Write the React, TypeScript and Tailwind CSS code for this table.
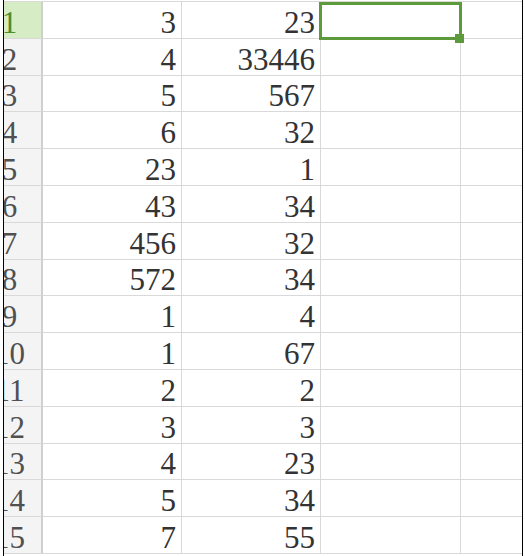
const rows: [number, string, string][] = [
  [1, "3", "23"],
  [2, "4", "33446"],
  [3, "5", "567"],
  [4, "6", "32"],
  [5, "23", "1"],
  [6, "43", "34"],
  [7, "456", "32"],
  [8, "572", "34"],
  [9, "1", "4"],
  [10, "1", "67"],
  [11, "2", "2"],
  [12, "3", "3"],
  [13, "4", "23"],
  [14, "5", "34"],
  [15, "7", "55"],
];

export default function App() {
  return (
    <div
      className="relative flex h-[556px] w-[525px] overflow-hidden bg-white"
      style={{ fontFamily: '"Liberation Serif", serif' }}
    >
      <div className="w-[3px] shrink-0" />
      <div className="w-px shrink-0 bg-black" />

      <div className="flex w-[518px] shrink-0 flex-col pt-px">
        <div className="border-t border-[#d9d9d9]">
          {rows.map(([n, a, b]) => {
            const active = n === 1;
            return (
              <div key={n} className="flex h-[36.8px] text-[31px] leading-none">
                <div
                  className={
                    "flex w-[39px] shrink-0 items-end overflow-hidden border-r-2 border-b border-r-[#cfcfcf] border-b-[#d9d9d9] " +
                    (active ? "bg-[#d6ecc5] text-[#4e8d2c]" : "bg-[#f4f4f4] text-[#505050]")
                  }
                >
                  <div className="ml-[-1px] flex w-[13px] shrink-0 justify-center">{n}</div>
                </div>
                <div className="flex w-[139px] shrink-0 items-end justify-end border-r border-b border-[#d9d9d9] pr-[5px] text-[#333333]">
                  {a}
                </div>
                <div className="flex w-[139px] shrink-0 items-end justify-end border-r border-b border-[#d9d9d9] pr-[5px] text-[#333333]">
                  {b}
                </div>
                <div className="w-[140px] shrink-0 border-r border-b border-[#d9d9d9]" />
                <div className="flex-1 border-b border-[#d9d9d9]" />
              </div>
            );
          })}
        </div>
      </div>

      <div className="w-px shrink-0 bg-black" />
      <div className="flex-1" />

      {/* selected cell C1 */}
      <div className="absolute left-[319px] top-[2px] h-[38px] w-[143px] border-[3px] border-[#5c9a3c]" />
      <div className="absolute left-[455px] top-[34px] h-[9px] w-[9px] bg-[#5c9a3c]" />
    </div>
  );
}
